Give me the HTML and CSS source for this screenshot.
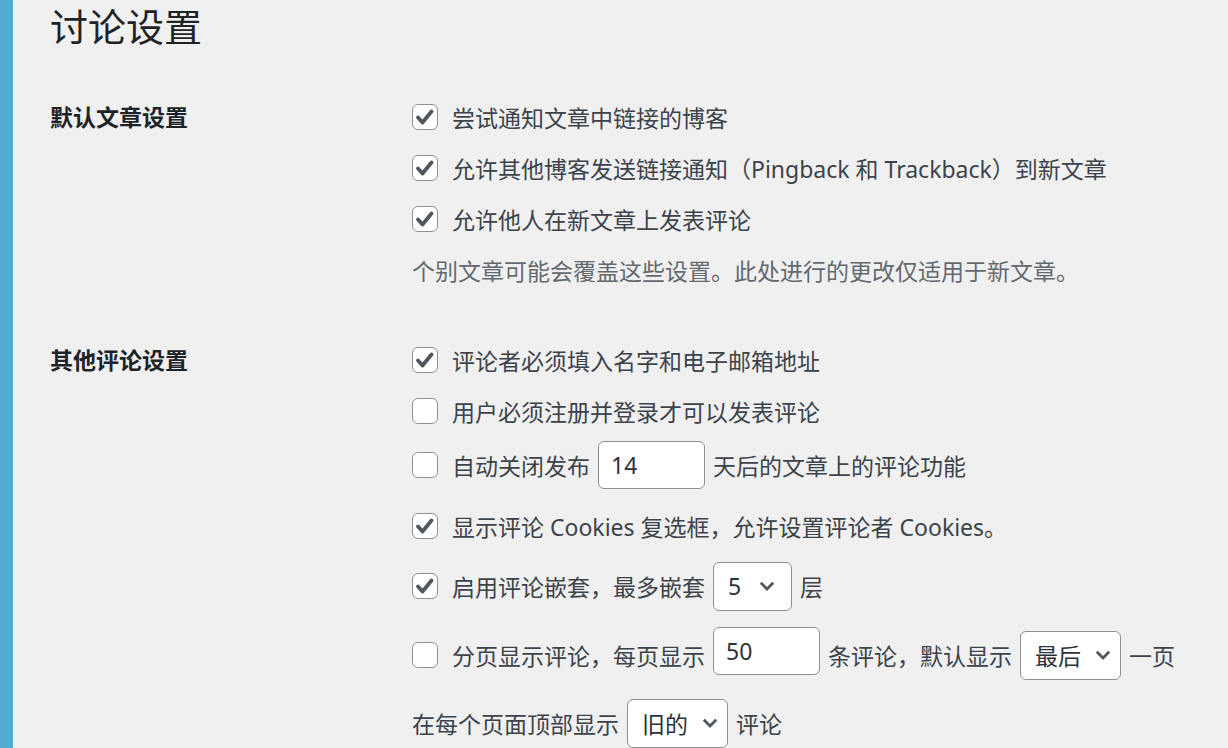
FILE: index.html
```html
<!DOCTYPE html>
<html lang="zh-CN">
<head>
    <meta charset="UTF-8">
    <title>讨论设置</title>
    <link rel="stylesheet" href="styles.css">
</head>
<body>
    <div class="page">
        <div class="side-strip"></div>
        <div class="main">
            <h1>讨论设置</h1>

            <div class="form-row first">
                <div class="row-label">默认文章设置</div>
                <div class="row-fields">
                    <label class="opt"><span class="box on"><svg viewBox="0 0 26 26"><path d="M6 13.5l4.5 5 9-11"/></svg></span>尝试通知文章中链接的博客</label>
                    <label class="opt"><span class="box on"><svg viewBox="0 0 26 26"><path d="M6 13.5l4.5 5 9-11"/></svg></span>允许其他博客发送链接通知（Pingback 和 Trackback）到新文章</label>
                    <label class="opt"><span class="box on"><svg viewBox="0 0 26 26"><path d="M6 13.5l4.5 5 9-11"/></svg></span>允许他人在新文章上发表评论</label>
                    <p class="opt description">个别文章可能会覆盖这些设置。此处进行的更改仅适用于新文章。</p>
                </div>
            </div>

            <div class="form-row">
                <div class="row-label">其他评论设置</div>
                <div class="row-fields">
                    <label class="opt"><span class="box on"><svg viewBox="0 0 26 26"><path d="M6 13.5l4.5 5 9-11"/></svg></span>评论者必须填入名字和电子邮箱地址</label>
                    <label class="opt"><span class="box"></span>用户必须注册并登录才可以发表评论</label>
                    <div class="opt close-row">
                        <span class="box"></span>自动关闭发布
                        <input type="text" class="field num" value="14">
                        天后的文章上的评论功能
                    </div>
                    <label class="opt cookies-row"><span class="box on"><svg viewBox="0 0 26 26"><path d="M6 13.5l4.5 5 9-11"/></svg></span>显示评论 Cookies 复选框，允许设置评论者 Cookies。</label>
                    <div class="opt thread-row">
                        <span class="box on"><svg viewBox="0 0 26 26"><path d="M6 13.5l4.5 5 9-11"/></svg></span>启用评论嵌套，最多嵌套
                        <span class="select sel-depth">5<svg viewBox="0 0 16 10"><path d="M1.8 1.8l6.2 6.2 6.2-6.2"/></svg></span>
                        层
                    </div>
                    <div class="opt page-row">
                        <span class="box"></span>分页显示评论，每页显示
                        <input type="text" class="field num raised" value="50">
                        条评论，默认显示
                        <span class="select sel-wide">最后<svg viewBox="0 0 16 10"><path d="M1.8 1.8l6.2 6.2 6.2-6.2"/></svg></span>
                        一页
                    </div>
                    <div class="opt order-row">
                        在每个页面顶部显示
                        <span class="select sel-wide">旧的<svg viewBox="0 0 16 10"><path d="M1.8 1.8l6.2 6.2 6.2-6.2"/></svg></span>
                        评论
                    </div>
                </div>
            </div>
        </div>
    </div>
</body>
</html>
```

FILE: styles.css
```css
body {
    margin: 0;
    background: #f0f0f1;
    color: #3c434a;
    font-family: "Noto Sans", "Noto Sans CJK SC", sans-serif;
    font-size: 23px;
    overflow: hidden;
}
.page {
    display: flex;
    min-height: 100vh;
}
.side-strip {
    width: 13px;
    flex-shrink: 0;
    background: #52abd0;
}
.main {
    flex: 1;
    padding-left: 37px;
}
h1 {
    margin: 0;
    font-size: 38px;
    font-weight: 400;
    line-height: 52px;
    color: #1d2327;
}
.form-row {
    display: flex;
    margin-top: 39px;
}
.form-row.first {
    margin-top: 39.5px;
}
.row-label {
    width: 362px;
    flex-shrink: 0;
    font-weight: 700;
    color: #1d2327;
    line-height: 51px;
}
.row-fields {
    display: flex;
    flex-direction: column;
}
.opt {
    display: flex;
    align-items: center;
    height: 51px;
    margin: 0;
    white-space: nowrap;
}
.description {
    color: #646970;
}
.box {
    width: 26px;
    height: 26px;
    box-sizing: border-box;
    border: 1.5px solid #8c8f94;
    border-radius: 6px;
    background: #fff;
    margin-right: 14px;
    flex-shrink: 0;
    display: flex;
    align-items: center;
    justify-content: center;
    overflow: hidden;
}
.box svg {
    width: 26px;
    height: 26px;
    flex-shrink: 0;
    fill: none;
    stroke: #50575e;
    stroke-width: 3.8;
    stroke-linecap: round;
    stroke-linejoin: round;
}
.field {
    box-sizing: border-box;
    height: 48px;
    border: 1.5px solid #8c8f94;
    border-radius: 6px;
    background: #fff;
    font-family: inherit;
    font-size: 23px;
    color: #2c3338;
    padding: 0 12px;
    margin: 0 8px;
}
.num {
    width: 107px;
}
.raised {
    margin-bottom: 8px;
}
.select {
    box-sizing: border-box;
    height: 49px;
    display: inline-flex;
    align-items: center;
    justify-content: space-between;
    border: 1.5px solid #8c8f94;
    border-radius: 6px;
    background: #fff;
    color: #2c3338;
    padding: 0 9px 0 14px;
    margin: 0 8px;
}
.select svg {
    width: 16px;
    height: 10px;
    fill: none;
    stroke: #50575e;
    stroke-width: 2.8;
}
.sel-depth {
    width: 79px;
    padding-right: 16px;
}
.sel-wide {
    width: 101px;
}
.close-row {
    margin-top: 3px;
}
.cookies-row {
    margin-top: 10px;
}
.thread-row {
    margin-top: 9px;
}
.page-row {
    margin-top: 18px;
}
.order-row {
    margin-top: 17px;
}
```
